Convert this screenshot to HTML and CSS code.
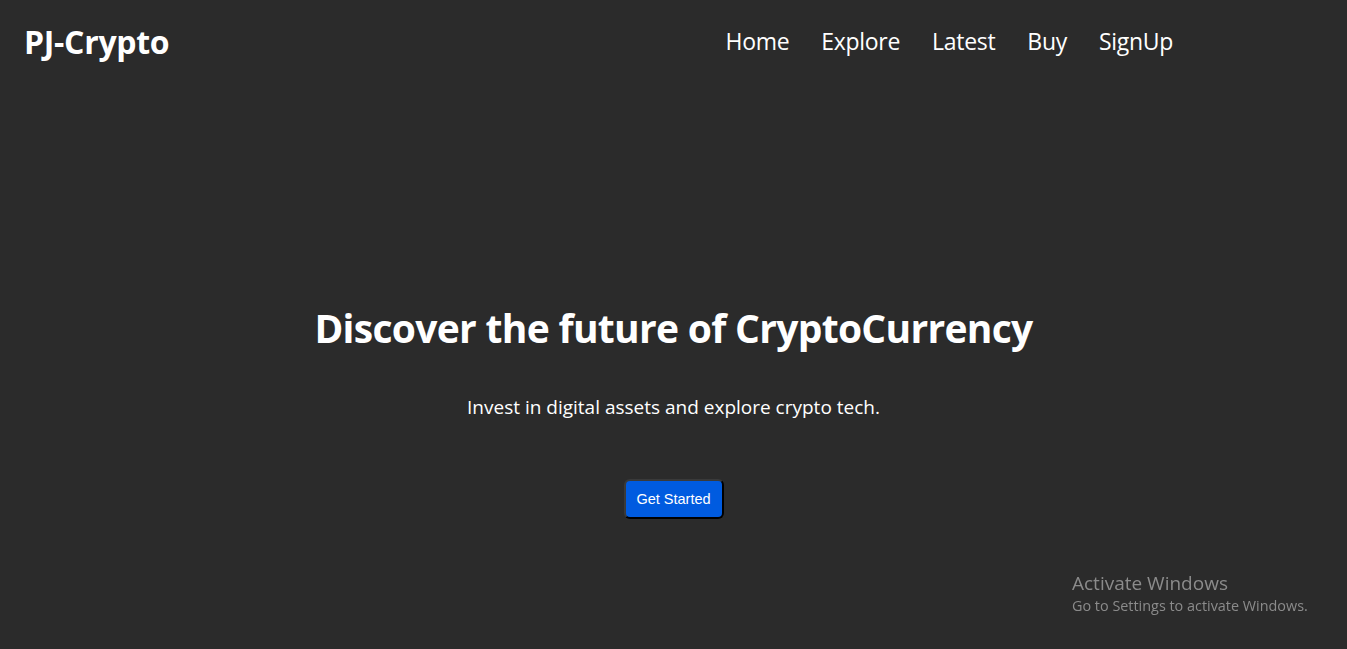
FILE: index.html
```html
<!DOCTYPE html>
<html lang="en">
<head>
<meta charset="utf-8">
<title>PJ-Crypto</title>
<link rel="stylesheet" href="styles.css">
</head>
<body>
<header class="header">
  <div class="logo">PJ-Crypto</div>
  <nav class="nav">
    <a href="#">Home</a>
    <a href="#">Explore</a>
    <a href="#">Latest</a>
    <a href="#">Buy</a>
    <a href="#">SignUp</a>
  </nav>
</header>
<main class="hero">
  <h1 class="hero-title">Discover the future of CryptoCurrency</h1>
  <p class="hero-sub">Invest in digital assets and explore crypto tech.</p>
  <button class="cta">Get Started</button>
</main>
<div class="watermark">
  <div class="wm-title">Activate Windows</div>
  <div class="wm-sub">Go to Settings to activate Windows.</div>
</div>
</body>
</html>
```

FILE: styles.css
```css
* { box-sizing: border-box; }
html, body { margin: 0; padding: 0; }
body {
  background: #2b2b2b;
  color: #ffffff;
  font-family: "Open Sans", "Noto Sans", sans-serif;
  height: 649px;
  overflow: hidden;
}
.header {
  display: flex;
  justify-content: space-between;
  align-items: center;
  height: 82px;
  padding: 0 174px 0 24px;
}
.logo {
  font-size: 32px;
  font-weight: 700;
  letter-spacing: -0.3px;
}
.nav {
  display: flex;
  gap: 32px;
}
.nav a {
  color: #ffffff;
  text-decoration: none;
  font-size: 23px;
  letter-spacing: -0.3px;
}
.hero {
  display: flex;
  flex-direction: column;
  align-items: center;
  padding-top: 220px;
}
.hero-title {
  margin: 0;
  font-size: 39px;
  line-height: 52px;
  font-weight: 700;
  letter-spacing: -0.7px;
}
.hero-sub {
  margin: 40px 0 0;
  font-size: 19px;
  line-height: 27px;
}
.cta {
  margin-top: 58px;
  width: 100px;
  height: 40px;
  background: #005be0;
  color: #ffffff;
  border: 2px outset #3a3a3a;
  border-right-color: #000;
  border-bottom-color: #000;
  border-radius: 6px;
  font-family: "Liberation Sans", Arial, sans-serif;
  font-size: 14.5px;
  padding: 0;
}
.watermark {
  position: fixed;
  left: 1072px;
  top: 571px;
  color: #8b8b8b;
}
.wm-title {
  font-size: 19px;
  line-height: 25px;
}
.wm-sub {
  font-size: 14.4px;
  line-height: 20px;
}
```
